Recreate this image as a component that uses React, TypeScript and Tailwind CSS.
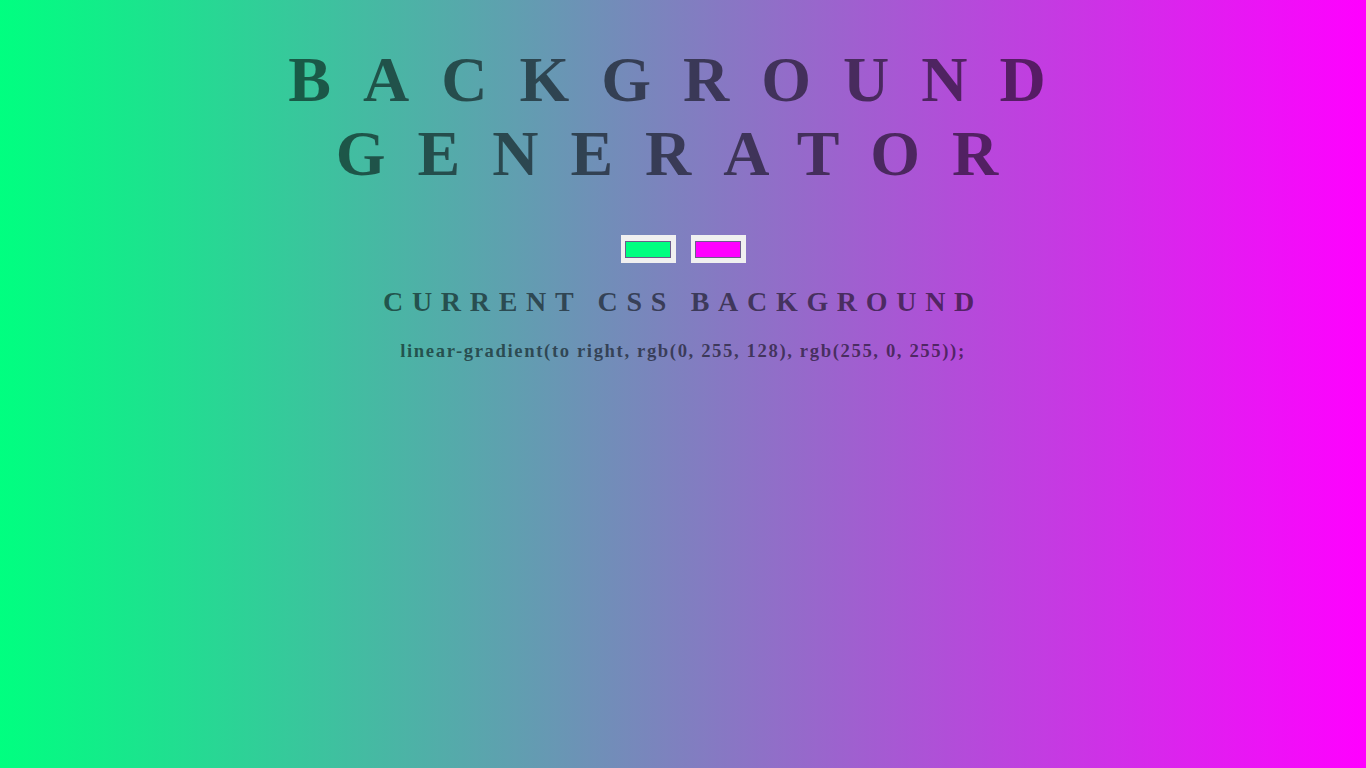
import React, { useState } from 'react';

const serif = "font-['Liberation_Serif','Times_New_Roman',serif]";

const Swatch: React.FC<{ color: string }> = ({ color }) => (
  <div className="w-[55px] h-[28px] bg-[#f0f0f0] flex items-center justify-center">
    <div className="w-[46px] h-[17px] border border-[#6c5c8c]" style={{ backgroundColor: color }} />
  </div>
);

const App: React.FC = () => {
  const [left] = useState('rgb(0, 255, 128)');
  const [right] = useState('rgb(255, 0, 255)');
  const css = `linear-gradient(to right, ${left}, ${right});`;

  return (
    <div
      className={`min-h-screen w-full ${serif} text-[rgba(0,0,0,0.55)] text-center uppercase bg-[linear-gradient(to_right,rgb(0,255,128),rgb(255,0,255))] pt-[43px]`}
    >
      <h1 className="text-[64px] font-bold leading-[73.5px] tracking-[0.5em]">
        Background Generator
      </h1>

      <div className="mt-[45px] flex justify-center gap-[15px]">
        <Swatch color={left} />
        <Swatch color={right} />
      </div>

      <h2 className="mt-[23px] text-[28px] font-bold leading-[32px] tracking-[8.7px]">
        Current CSS Background
      </h2>

      <h3 className="mt-[22px] normal-case text-[18.72px] font-bold leading-[21.5px] tracking-[1.6px]">
        {css}
      </h3>
    </div>
  );
};

export default App;
